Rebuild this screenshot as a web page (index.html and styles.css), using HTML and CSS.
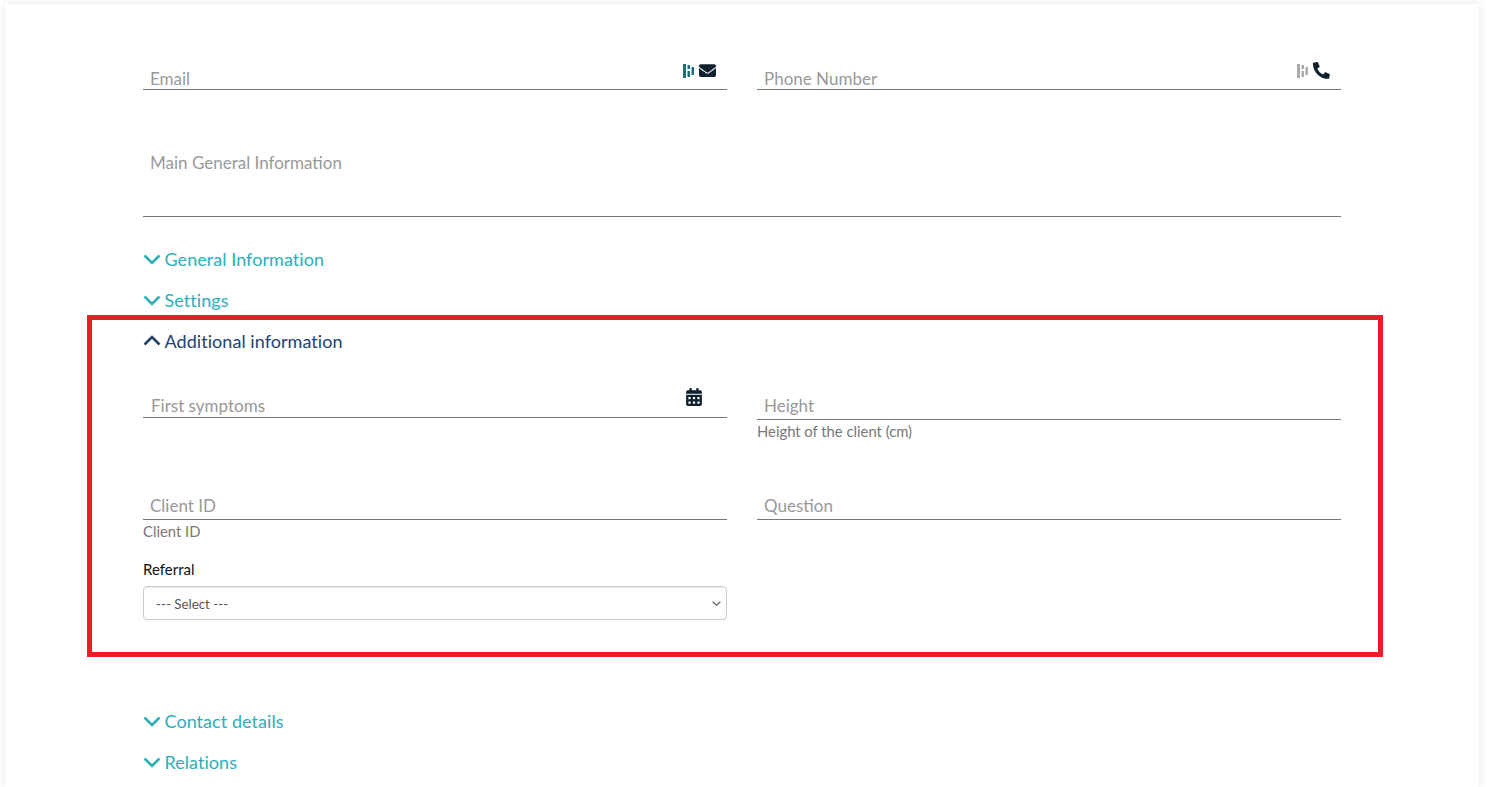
FILE: index.html
```html
<!DOCTYPE html>
<html lang="en">
<head>
<meta charset="utf-8">
<title>Client form</title>
<link rel="stylesheet" href="styles.css">
</head>
<body>
<main class="card">
  <div class="grid row-contact">
    <div class="field">
      <div class="input"><span class="ph">Email</span>
        <span class="icons">
          <svg class="logo teal" viewBox="0 0 11 14"><path d="M0 0h3v14H0zM4.500 1H7v4H4.500zM4.500 7H7v6H4.500zM8.500 3H11v8H8.500z"/></svg>
          <svg class="ico-mail" viewBox="0 0 512 384"><path d="M502 127c4-3 10 0 10 5v204c0 26-22 48-48 48H48c-26 0-48-22-48-48V132c0-5 6-8 10-5 22 17 52 39 154 113 21 15 57 48 92 48 36 0 72-33 92-48 102-74 132-96 154-113zM256 256c23 0 57-29 73-41 133-97 143-105 174-129 6-5 9-12 9-19V48c0-26-22-48-48-48H48C22 0 0 22 0 48v19c0 7 3 14 9 19 31 24 41 32 174 129 16 12 50 41 73 41z"/></svg>
        </span>
      </div>
    </div>
    <div class="field">
      <div class="input"><span class="ph">Phone Number</span>
        <span class="icons">
          <svg class="logo grey" viewBox="0 0 11 14"><path d="M0 0h3v14H0zM4.500 1H7v4H4.500zM4.500 7H7v6H4.500zM8.500 3H11v8H8.500z"/></svg>
          <svg class="ico-phone" viewBox="0 0 512 512"><path d="M493 24L389 0c-11-3-23 3-27 14l-48 112c-4 10-1 21 7 28l61 50c-36 76-98 139-175 175l-50-61c-7-8-18-11-28-7L17 359c-11 5-17 16-14 27l24 104c3 11 12 18 23 18 256 0 464-207 464-464 0-11-8-20-21-20z" transform="matrix(-1 0 0 1 512 0)"/></svg>
        </span>
      </div>
    </div>
  </div>

  <div class="field main-info">
    <div class="input tall"><span class="ph">Main General Information</span></div>
  </div>

  <div class="section closed">
    <svg class="chev" viewBox="0 0 18 12"><path d="M1.500 2.500l7.500 7.500 7.500-7.500"/></svg>General Information
  </div>
  <div class="section closed">
    <svg class="chev" viewBox="0 0 18 12"><path d="M1.500 2.500l7.500 7.500 7.500-7.500"/></svg>Settings
  </div>
  <div class="section open">
    <svg class="chev" viewBox="0 0 18 12"><path d="M1.500 9.500l7.500-7.500 7.500 7.500"/></svg>Additional information
  </div>

  <div class="grid row-add">
    <div class="field">
      <div class="input date"><span class="ph ph-date">First symptoms</span>
        <span class="icons icons-date">
          <svg class="ico-cal" viewBox="0 0 448 512"><path d="M0 464c0 26 22 48 48 48h352c26 0 48-22 48-48V192H0v272zm320-196c0-7 5-12 12-12h40c7 0 12 5 12 12v40c0 7-5 12-12 12h-40c-7 0-12-5-12-12v-40zm0 128c0-7 5-12 12-12h40c7 0 12 5 12 12v40c0 7-5 12-12 12h-40c-7 0-12-5-12-12v-40zM192 268c0-7 5-12 12-12h40c7 0 12 5 12 12v40c0 7-5 12-12 12h-40c-7 0-12-5-12-12v-40zm0 128c0-7 5-12 12-12h40c7 0 12 5 12 12v40c0 7-5 12-12 12h-40c-7 0-12-5-12-12v-40zM64 268c0-7 5-12 12-12h40c7 0 12 5 12 12v40c0 7-5 12-12 12H76c-7 0-12-5-12-12v-40zm0 128c0-7 5-12 12-12h40c7 0 12 5 12 12v40c0 7-5 12-12 12H76c-7 0-12-5-12-12v-40zM400 64h-48V16c0-9-7-16-16-16h-32c-9 0-16 7-16 16v48H160V16c0-9-7-16-16-16h-32c-9 0-16 7-16 16v48H48C22 64 0 86 0 112v48h448v-48c0-26-22-48-48-48z"/></svg>
        </span>
      </div>
    </div>
    <div class="field">
      <div class="input pad"><span class="ph">Height</span></div>
      <div class="help">Height of the client (cm)</div>
    </div>
    <div class="field">
      <div class="input pad"><span class="ph">Client ID</span></div>
      <div class="help">Client ID</div>
    </div>
    <div class="field">
      <div class="input pad"><span class="ph">Question</span></div>
    </div>
    <div class="field select-field">
      <label class="select-label" for="referral">Referral</label>
      <select class="select" id="referral"><option>--- Select ---</option></select>
    </div>
  </div>

  <div class="section closed contact">
    <svg class="chev" viewBox="0 0 18 12"><path d="M1.500 2.500l7.500 7.500 7.500-7.500"/></svg>Contact details
  </div>
  <div class="section closed">
    <svg class="chev" viewBox="0 0 18 12"><path d="M1.500 2.500l7.500 7.500 7.500-7.500"/></svg>Relations
  </div>
</main>
<div class="highlight"></div>
</body>
</html>
```

FILE: styles.css
```css
* { box-sizing: border-box; }
html, body { height: 100%; overflow: hidden; }
body {
  margin: 0;
  background: #fff;
  font-family: Lato, "Open Sans", sans-serif;
  color: #333;
}
.card {
  margin: 4px 9px 0 5px;
  height: 783px;
  overflow: visible;
  padding: 65px 138px 0;
  background: #fff;
  box-shadow: 0 0 8px rgba(60, 80, 80, 0.14);
}
.grid {
  display: grid;
  grid-template-columns: 1fr 1fr;
  column-gap: 30px;
}
.input {
  position: relative;
  height: 21px;
  border-bottom: 1px solid #777;
  padding-left: 7px;
  display: flex;
  align-items: flex-end;
}
.pad { padding-bottom: 3px; }
.ph {
  font-size: 17px;
  line-height: 20px;
  color: #999;
}
.icons {
  position: absolute;
  right: 11px;
  top: -5px;
  display: flex;
  align-items: flex-start;
  gap: 5px;
}
.logo { width: 11px; height: 14px; }
.teal { fill: #1f6f80; }
.grey { fill: #aaa; }
.ico-mail { width: 17px; height: 13px; fill: #10202f; }
.ico-phone { width: 17px; height: 17px; margin-top: -2px; fill: #10202f; }
.main-info { margin-top: 63px; }
.tall { height: 64px; align-items: flex-start; padding-top: 0; }
.section {
  display: flex;
  align-items: center;
  height: 41px;
  font-size: 18px;
  letter-spacing: 0.05px;
}
.main-info + .section { margin-top: 21px; }
.closed { color: #2bb0b8; }
.open { color: #24426e; }
.chev {
  width: 18px;
  height: 12px;
  margin-right: 3.500px;
  fill: none;
  stroke: currentColor;
  stroke-width: 2.600;
}
.row-add { margin-top: 38px; grid-auto-rows: min-content; }
.row-add .field { height: 100px; }
.date { height: 19px; padding-bottom: 1px; }
.ph-date { padding-left: 1px; }
.icons-date { right: 25px; top: -11px; }
.ico-cal { width: 16px; height: 18px; fill: #10202f; }
.help {
  margin-top: 1px;
  font-size: 14.800px;
  line-height: 20px;
  color: #777;
}
.row-add .select-field { height: auto; margin-top: -40px; }
.select-label {
  display: block;
  font-size: 15px;
  line-height: 20px;
  color: #111;
  margin-bottom: 7px;
}
.select {
  display: block;
  width: 100%;
  height: 34px;
  padding: 2px 12px 0;
  font-family: inherit;
  font-size: 13.330px;
  color: #555;
  background: #fff url("data:image/svg+xml,%3Csvg xmlns='http://www.w3.org/2000/svg' viewBox='0 0 9 5'%3E%3Cpath d='M.7.7l3.800 3.500L8.300.7' fill='none' stroke='%23666' stroke-width='1.300'/%3E%3C/svg%3E") no-repeat right 5px center / 9px 5px;
  appearance: none;
  border: 1px solid #ccc;
  border-radius: 4px;
  box-shadow: inset 0 1px 1px rgba(0, 0, 0, 0.075);
}
.contact { margin-top: 80px; }
.highlight {
  position: absolute;
  left: 87px;
  top: 315px;
  width: 1296px;
  height: 342px;
  border: 5px solid #ed1c24;
}
```
